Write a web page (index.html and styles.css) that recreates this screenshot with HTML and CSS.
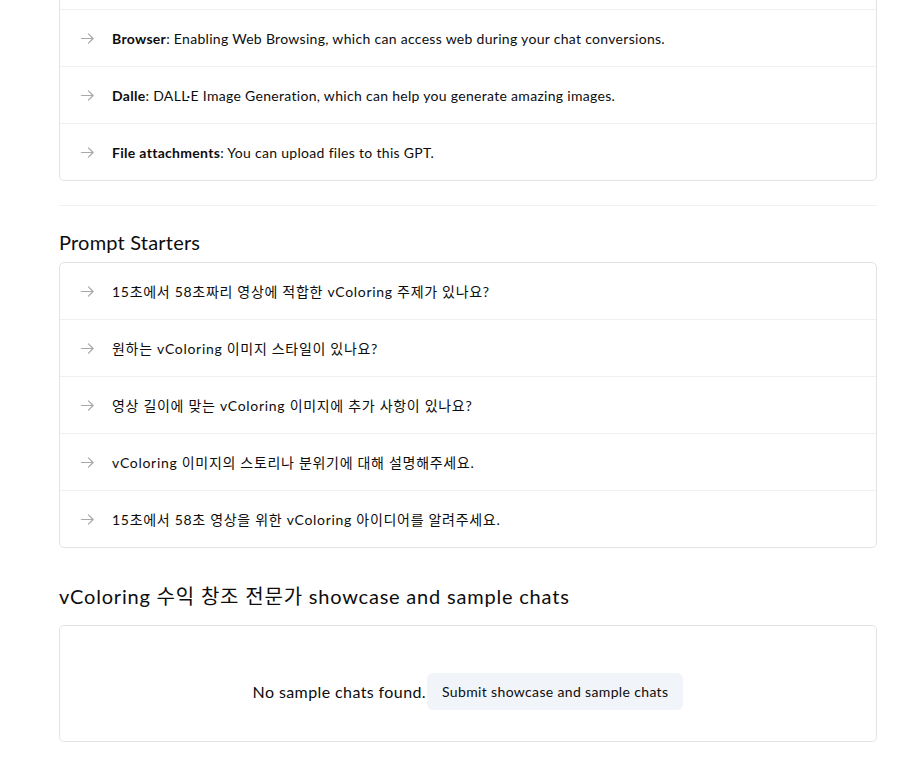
FILE: index.html
```html
<!DOCTYPE html>
<html lang="ko">
<head>
<meta charset="utf-8">
<link rel="stylesheet" href="styles.css">
</head>
<body>
<main class="page">
  <section class="card card-top">
    <div class="row row-hidden"></div>
    <div class="row">
      <svg class="arrow" viewBox="0 0 16 16"><path d="M1.5 8h12.5M9 3L14 8 9 13"/></svg>
      <span class="text"><b>Browser</b>: Enabling Web Browsing, which can access web during your chat conversions.</span>
    </div>
    <div class="row">
      <svg class="arrow" viewBox="0 0 16 16"><path d="M1.5 8h12.5M9 3L14 8 9 13"/></svg>
      <span class="text"><b>Dalle</b>: DALL·E Image Generation, which can help you generate amazing images.</span>
    </div>
    <div class="row">
      <svg class="arrow" viewBox="0 0 16 16"><path d="M1.5 8h12.5M9 3L14 8 9 13"/></svg>
      <span class="text"><b>File attachments</b>: You can upload files to this GPT.</span>
    </div>
  </section>

  <hr class="divider">

  <h2 class="heading">Prompt Starters</h2>
  <section class="card">
    <div class="row">
      <svg class="arrow" viewBox="0 0 16 16"><path d="M1.5 8h12.5M9 3L14 8 9 13"/></svg>
      <span class="text text-ko">15초에서 58초짜리 영상에 적합한 vColoring 주제가 있나요?</span>
    </div>
    <div class="row">
      <svg class="arrow" viewBox="0 0 16 16"><path d="M1.5 8h12.5M9 3L14 8 9 13"/></svg>
      <span class="text text-ko">원하는 vColoring 이미지 스타일이 있나요?</span>
    </div>
    <div class="row">
      <svg class="arrow" viewBox="0 0 16 16"><path d="M1.5 8h12.5M9 3L14 8 9 13"/></svg>
      <span class="text text-ko">영상 길이에 맞는 vColoring 이미지에 추가 사항이 있나요?</span>
    </div>
    <div class="row">
      <svg class="arrow" viewBox="0 0 16 16"><path d="M1.5 8h12.5M9 3L14 8 9 13"/></svg>
      <span class="text text-ko">vColoring 이미지의 스토리나 분위기에 대해 설명해주세요.</span>
    </div>
    <div class="row">
      <svg class="arrow" viewBox="0 0 16 16"><path d="M1.5 8h12.5M9 3L14 8 9 13"/></svg>
      <span class="text text-ko">15초에서 58초 영상을 위한 vColoring 아이디어를 알려주세요.</span>
    </div>
  </section>

  <h2 class="heading heading-lg">vColoring 수익 창조 전문가 showcase and sample chats</h2>
  <section class="card card-empty">
    <span class="empty-text">No sample chats found.</span>
    <button class="submit-btn" type="button">Submit showcase and sample chats</button>
  </section>
</main>
</body>
</html>
```

FILE: styles.css
```css
* { box-sizing: border-box; }
html, body {
  margin: 0;
  padding: 0;
  background: #ffffff;
}
body {
  font-family: Lato, "Noto Sans CJK KR", sans-serif;
  color: #0d0d0d;
  overflow: hidden;
}
.page {
  width: 818px;
  margin: -48px 0 0 59px;
  display: flex;
  flex-direction: column;
}
.card {
  border: 1px solid #e3e3e3;
  border-radius: 5px;
  display: flex;
  flex-direction: column;
}
.row {
  height: 57px;
  display: flex;
  align-items: center;
  padding-left: 20px;
  padding-top: 1px;
  border-top: 1px solid #f0f0f0;
}
.row:first-child {
  height: 56px;
  border-top: none;
}
.arrow {
  width: 15px;
  height: 15px;
  flex: none;
  fill: none;
  stroke: #a8a8ad;
  stroke-width: 1.3;
  stroke-linecap: round;
  stroke-linejoin: round;
}
.text {
  margin-left: 17px;
  font-size: 14px;
  line-height: 20px;
  letter-spacing: 0.3px;
}
.text-ko { letter-spacing: 0.7px; }
.text b { font-weight: 700; }
.divider {
  margin: 24px 0 0;
  border: none;
  border-top: 1px solid #f0f0f0;
  height: 0;
}
.heading {
  margin: 24px 0 8px;
  font-size: 20px;
  font-weight: 400;
  line-height: 24px;
  letter-spacing: 0.2px;
}
.heading-lg {
  margin: 35px 0 16px;
  line-height: 26px;
  letter-spacing: 0.8px;
}
.card-empty {
  height: 117px;
  flex-direction: row;
  align-items: center;
  justify-content: center;
  padding-top: 16px;
}
.empty-text {
  font-size: 16px;
  letter-spacing: 0.4px;
}
.submit-btn {
  margin-left: 1px;
  border: none;
  background: #f1f4f9;
  border-radius: 6px;
  height: 37px;
  padding: 0 15px;
  font-family: inherit;
  font-size: 14px;
  letter-spacing: 0.35px;
  color: #0d0d0d;
}
```
